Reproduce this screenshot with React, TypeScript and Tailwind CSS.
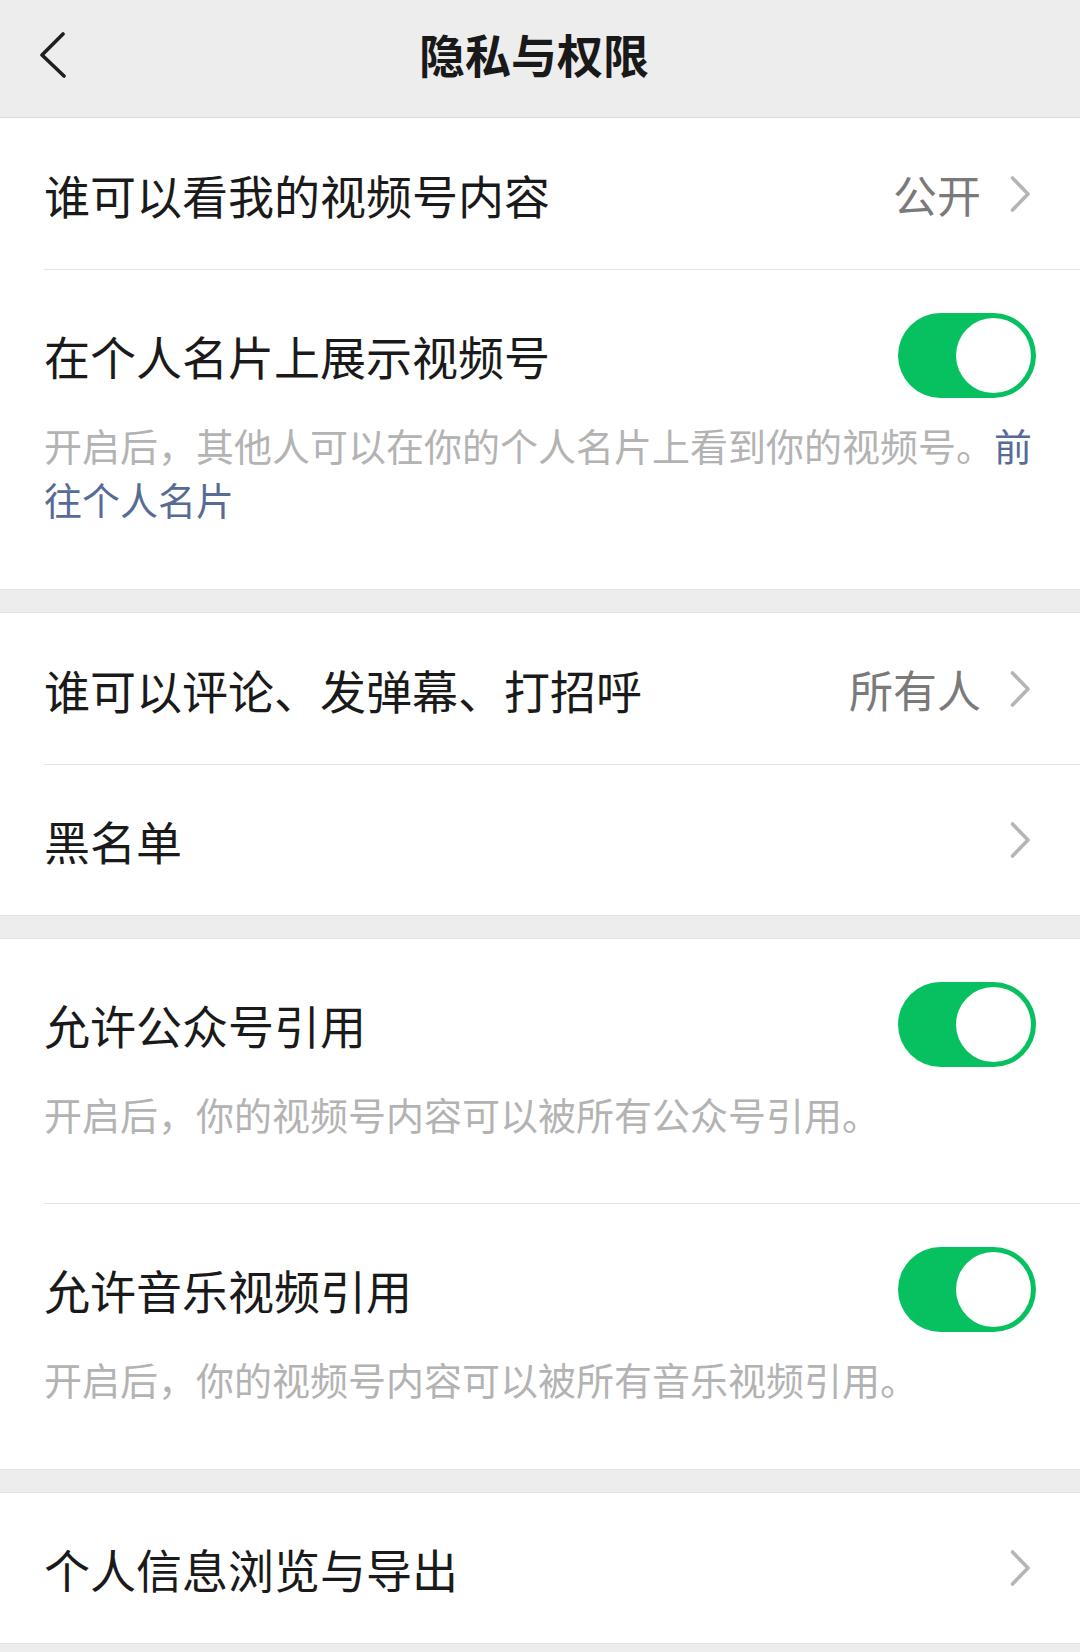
import type { ReactNode } from 'react';

const font = "font-['Noto_Sans_CJK_SC','Noto_Sans',sans-serif]";

function Chevron() {
  return (
    <svg width="20" height="36" viewBox="0 0 20 36" className="shrink-0" fill="none">
      <path d="M2.5 2 L18 18 L2.5 34" stroke="#b5b5b5" strokeWidth="3.6" strokeLinecap="round" strokeLinejoin="round" />
    </svg>
  );
}

function Toggle() {
  return (
    <div className="flex h-[85px] w-[138px] shrink-0 items-center justify-end rounded-full bg-[#07c160] pr-[5px]">
      <span className="h-[75px] w-[75px] rounded-full bg-white" />
    </div>
  );
}

function LinkRow({ label, value, last }: { label: string; value?: string; last?: boolean }) {
  return (
    <div className="pl-[44px]">
      <div
        className={`flex items-center justify-between pr-[50px] ${
          last ? 'h-[150px]' : 'h-[152px] border-b border-[#e5e5e5]'
        }`}
      >
        <span className="text-[46px] leading-[60px] text-[#1a1a1a]">{label}</span>
        <div className="flex items-center">
          {value && <span className="mr-[29px] text-[44px] leading-[60px] text-[#7a7a7a]">{value}</span>}
          <Chevron />
        </div>
      </div>
    </div>
  );
}

function SwitchRow({ label, children, last }: { label: string; children: ReactNode; last?: boolean }) {
  return (
    <div className="pl-[44px]">
      <div className={`pr-[44px] pt-[43px] ${last ? 'pb-[63px]' : 'border-b border-[#e5e5e5] pb-[62px]'}`}>
        <div className="flex h-[84px] items-center justify-between">
          <span className="text-[46px] leading-[60px] text-[#1a1a1a]">{label}</span>
          <Toggle />
        </div>
        <p className="mt-[21px] text-[38px] leading-[54px] text-[#b3b3b3]">{children}</p>
      </div>
    </div>
  );
}

function Gap() {
  return <div className="h-[24px] border-y border-[#e2e2e2] bg-[#ededed]" />;
}

export default function App() {
  return (
    <div className={`min-h-[1652px] w-[1080px] bg-[#ededed] ${font}`}>
      <header className="grid h-[118px] grid-cols-[1fr_auto_1fr] items-center border-b border-[#dcdcdc] bg-[#ededed] pb-[12px]">
        <div className="pl-[38px]">
          <svg width="30" height="46" viewBox="0 0 30 46" fill="none" className="mt-[4px]">
            <path d="M25 2 L4 23 L26 44" stroke="#1f1f1f" strokeWidth="3.6" strokeLinecap="round" strokeLinejoin="round" />
          </svg>
        </div>
        <h1 className="mr-[12px] text-[46px] font-bold leading-[60px] text-[#191919]">隐私与权限</h1>
        <div />
      </header>

      <section className="bg-white">
        <LinkRow label="谁可以看我的视频号内容" value="公开" />
        <SwitchRow label="在个人名片上展示视频号" last>
          开启后，其他人可以在你的个人名片上看到你的视频号。
          <span className="text-[#576b95]">前往个人名片</span>
        </SwitchRow>
      </section>
      <Gap />

      <section className="bg-white">
        <LinkRow label="谁可以评论、发弹幕、打招呼" value="所有人" />
        <LinkRow label="黑名单" last />
      </section>
      <Gap />

      <section className="bg-white">
        <SwitchRow label="允许公众号引用">开启后，你的视频号内容可以被所有公众号引用。</SwitchRow>
        <SwitchRow label="允许音乐视频引用" last>
          开启后，你的视频号内容可以被所有音乐视频引用。
        </SwitchRow>
      </section>
      <Gap />

      <section className="border-b border-[#e2e2e2] bg-white">
        <LinkRow label="个人信息浏览与导出" last />
      </section>
    </div>
  );
}
